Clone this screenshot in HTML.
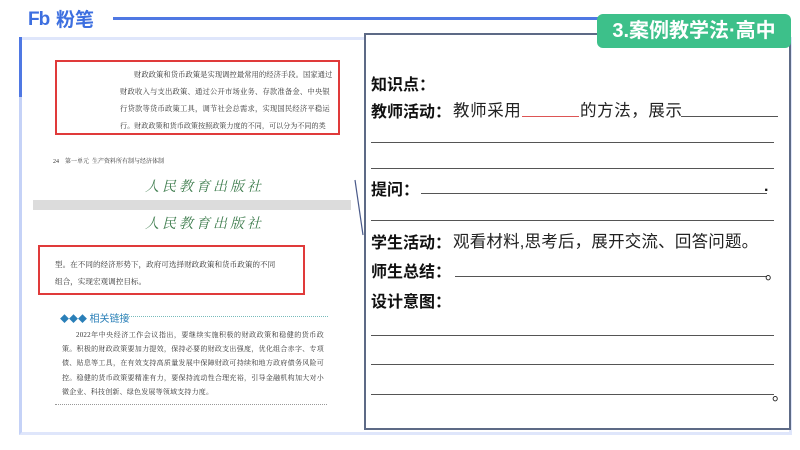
<!DOCTYPE html>
<html><head><meta charset="utf-8"><style>
*{margin:0;padding:0;box-sizing:border-box}
body{width:800px;height:450px;background:#fff;position:relative;overflow:hidden;font-family:"Liberation Sans","Noto Sans CJK SC",sans-serif}
.a{position:absolute;white-space:nowrap}
.serif{font-family:"Liberation Serif","Noto Serif CJK SC",serif;color:#333}
.lbl{font-size:16px;font-weight:bold;color:#111}
.t{font-size:16.5px;color:#222}
.ln{position:absolute;height:1px;background:#555}
</style></head><body>
<div class="a" style="left:28px;top:9px;font-size:19px;font-weight:bold;color:#3d6fe0;letter-spacing:-1px">Fb</div>
<div class="a" style="left:56px;top:8px;font-size:19px;font-weight:bold;color:#3d6fe0;font-family:'Noto Sans CJK SC',sans-serif;line-height:22px">粉笔</div>
<div class="a" style="left:113px;top:17px;width:490px;height:3px;background:#4f78e3"></div>
<div class="a" style="left:19px;top:37px;width:773px;height:398px;border:3px solid #dfe6fb;border-left:3px solid #c5d2f7"></div>
<div class="a" style="left:19px;top:37px;width:3px;height:60px;background:#4f78e3"></div>
<div class="a" style="left:55px;top:60px;width:285px;height:75px;border:2px solid #e03a3a"></div>
<div class="a serif" style="left:134px;top:70px;font-size:7.3px;letter-spacing:0.05px">财政政策和货币政策是实现调控最常用的经济手段。国家通过</div>
<div class="a serif" style="left:120px;top:87px;font-size:7.3px;letter-spacing:0.2px">财政收入与支出政策、通过公开市场业务、存款准备金、中央银</div>
<div class="a serif" style="left:120px;top:104px;font-size:7.3px;letter-spacing:0.2px">行贷款等货币政策工具，调节社会总需求，实现国民经济平稳运</div>
<div class="a serif" style="left:120px;top:121px;font-size:7.1px;letter-spacing:0px">行。财政政策和货币政策按照政策力度的不同，可以分为不同的类</div>
<div class="a serif" style="left:53px;top:156px;font-size:6px">24 &nbsp;&nbsp;&nbsp;第一单元 &nbsp;生产资料所有制与经济体制</div>
<div class="a" style="left:145px;top:176px;font-size:14px;color:#3a7a4a;font-style:italic;font-family:'Noto Serif CJK SC',serif;letter-spacing:3px">人民教育出版社</div>
<div class="a" style="left:33px;top:200px;width:318px;height:10px;background:#dcdcdc"></div>
<div class="a" style="left:145px;top:213px;font-size:14px;color:#3a7a4a;font-style:italic;font-family:'Noto Serif CJK SC',serif;letter-spacing:3px">人民教育出版社</div>
<div class="a" style="left:38px;top:245px;width:267px;height:50px;border:2px solid #e03a3a"></div>
<div class="a serif" style="left:55px;top:256px;font-size:7.6px;line-height:17px">型。在不同的经济形势下，政府可选择财政政策和货币政策的不同<br>组合，实现宏观调控目标。</div>
<div class="a" style="left:60px;top:310px;font-size:9px;color:#2a7fb8">◆◆◆ <span style="font-size:10px">相关链接</span></div>
<div class="a" style="left:116px;top:316px;width:212px;border-top:1px dotted #7bb"></div>
<div class="a serif" style="left:62px;top:328px;width:262px;white-space:normal;font-size:7px;line-height:14.2px;text-indent:2em;text-align:justify;letter-spacing:0.2px">2022年中央经济工作会议指出，要继续实施积极的财政政策和稳健的货币政策。积极的财政政策要加力提效，保持必要的财政支出强度，优化组合赤字、专项债、贴息等工具，在有效支持高质量发展中保障财政可持续和地方政府债务风险可控。稳健的货币政策要精准有力，要保持流动性合理充裕，引导金融机构加大对小微企业、科技创新、绿色发展等领域支持力度。</div>
<div class="a" style="left:55px;top:404px;width:272px;border-top:1px dotted #999"></div>
<svg class="a" style="left:340px;top:170px" width="30" height="80"><line x1="15" y1="10" x2="23" y2="65" stroke="#4a5a8a" stroke-width="1.2"/></svg>
<div class="a" style="left:364px;top:33px;width:427px;height:397px;border:2px solid #5d6a86;background:#fff"></div>
<div class="a" style="left:597px;top:14px;width:194px;height:34px;background:#3dc08a;border-radius:6px;color:#fff;font-size:20px;font-weight:bold;text-align:center;line-height:34px">3.案例教学法·高中</div>
<div class="a lbl" style="left:371px;top:71px">知识点：</div>
<div class="a lbl" style="left:371px;top:98px">教师活动：</div>
<div class="a t" style="left:453px;top:97px;letter-spacing:0.6px">教师采用</div>
<div class="a" style="left:522px;top:116px;width:57px;height:1px;background:#d55"></div>
<div class="a t" style="left:580px;top:97px;letter-spacing:0.6px">的方法，展示</div>
<div class="ln" style="left:681px;top:116px;width:97px"></div>
<div class="ln" style="left:371px;top:142px;width:403px"></div>
<div class="ln" style="left:371px;top:168px;width:403px"></div>
<div class="a lbl" style="left:371px;top:176px">提问：</div>
<div class="ln" style="left:421px;top:193px;width:346px"></div>
<div class="a lbl" style="left:764px;top:178px">.</div>
<div class="ln" style="left:371px;top:220px;width:403px"></div>
<div class="a lbl" style="left:371px;top:229px">学生活动：</div>
<div class="a t" style="left:453px;top:228px;letter-spacing:0.2px">观看材料,思考后，展开交流、回答问题。</div>
<div class="a lbl" style="left:371px;top:258px">师生总结：</div>
<div class="ln" style="left:455px;top:276px;width:312px"></div>
<div class="a t" style="left:765px;top:260px">。</div>
<div class="a lbl" style="left:371px;top:288px">设计意图：</div>
<div class="ln" style="left:371px;top:335px;width:403px"></div>
<div class="ln" style="left:371px;top:364px;width:403px"></div>
<div class="ln" style="left:371px;top:394px;width:403px"></div>
<div class="a t" style="left:772px;top:381px">。</div>
</body></html>
